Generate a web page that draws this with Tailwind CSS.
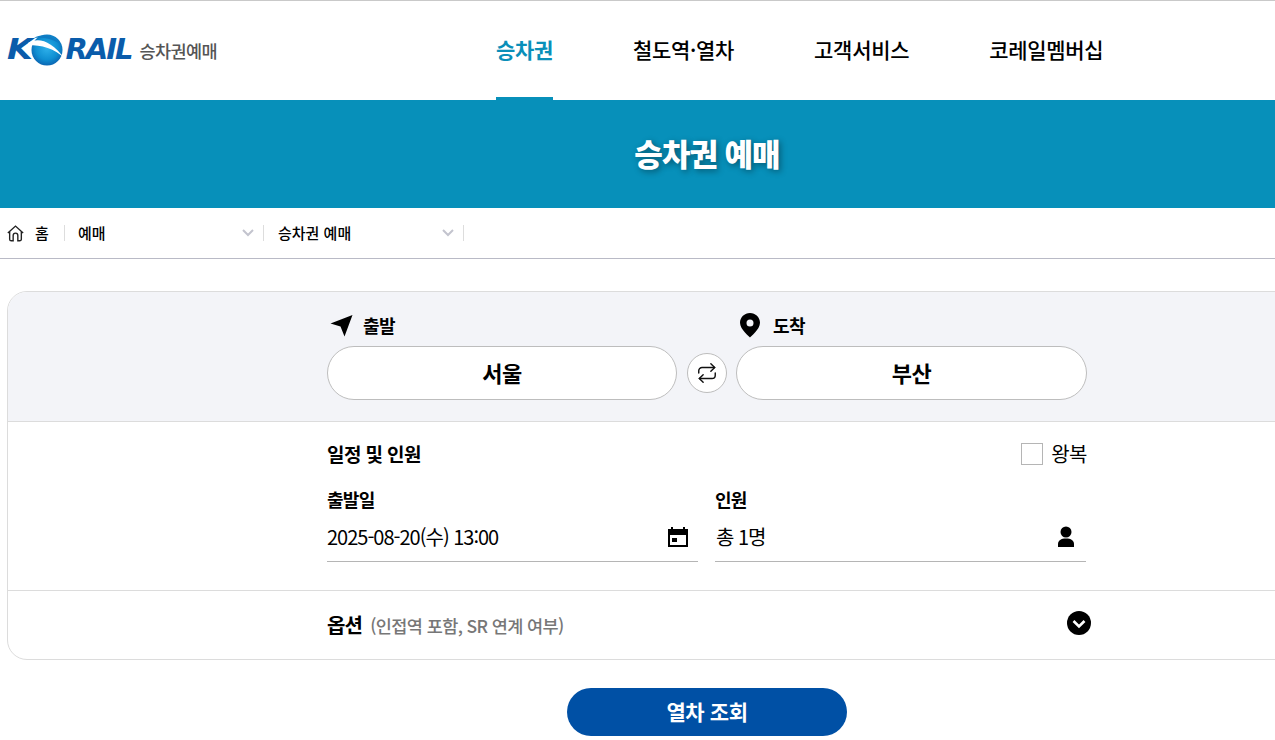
<!DOCTYPE html>
<html lang="ko">
<head>
<meta charset="utf-8">
<title>승차권 예매</title>
<script src="https://cdn.jsdelivr.net/npm/@tailwindcss/browser@4"></script>
</head>
<body class="bg-white text-black overflow-hidden font-['Noto_Sans_CJK_KR','Noto_Sans',sans-serif]">
<div class="w-[1275px] h-[740px] overflow-hidden">

  <!-- Header -->
  <header class="h-[100px] border-t border-[#c9c9c9] flex relative">
    <div class="w-[490px] shrink-0 flex items-center pl-[7px] pb-[2px]">
      <div class="relative flex items-center font-['DejaVu_Sans',sans-serif] italic font-bold text-[#0a5cab] text-[29px] leading-none tracking-[-2px]">
        <span class="inline-block origin-left scale-x-[1.15]">K</span>
        <svg class="w-[38px] h-[32px] relative z-10" viewBox="0 0 38 32">
          <defs>
            <radialGradient id="globe" cx="0.5" cy="0.45" r="0.6">
              <stop offset="0" stop-color="#2eb0ea"/>
              <stop offset="0.6" stop-color="#0f8fd2"/>
              <stop offset="1" stop-color="#0a5cab"/>
            </radialGradient>
          </defs>
          <circle cx="20" cy="16" r="15.500" fill="url(#globe)"/>
          <path d="M1 9C11 3 24 6 38 25C28 14 14 11 1 11Z" fill="#fff"/>
          <path d="M7 4C15 -1 26 1 32 9C24 4 15 3 7 4Z" fill="#0f7cc4"/>
        </svg>
        <span>RAIL</span>
      </div>
      <span class="ml-[8px] mt-[3px] text-[17.500px] font-medium text-[#555] tracking-[-0.6px]">승차권예매</span>
    </div>
    <nav class="flex text-[21px] font-medium tracking-[-0.3px] leading-none">
      <a class="relative flex items-center h-full w-[57px] justify-center whitespace-nowrap ml-[6px] pb-[2px] text-[#0a8fb9] font-bold">승차권<span class="absolute left-0 right-0 bottom-0 h-[3px] bg-[#0790ba]"></span></a>
      <a class="flex items-center h-full ml-[80px] pb-[2px] whitespace-nowrap">철도역·열차</a>
      <a class="flex items-center h-full ml-[80px] pb-[2px] whitespace-nowrap">고객서비스</a>
      <a class="flex items-center h-full ml-[80px] pb-[2px] whitespace-nowrap">코레일멤버십</a>
    </nav>
  </header>

  <!-- Title banner -->
  <div class="h-[108px] bg-[#0790ba] flex items-center justify-center pl-[139px] pb-[2px]">
    <h1 class="text-[31px] font-extrabold text-white tracking-[-1px] [text-shadow:2px_2px_6px_rgba(0,0,0,0.4)]">승차권 예매</h1>
  </div>

  <!-- Breadcrumb -->
  <div class="h-[51px] border-b border-[#b9bac6] flex items-center text-[15px] font-medium">
    <div class="flex items-center w-[65px] h-[16px] pl-[7px] border-r border-[#ddd]">
      <svg class="w-[17px] h-[17px] shrink-0" viewBox="0 0 16 16" fill="none" stroke="#222" stroke-width="1.300">
        <path d="M0.800 7.600L8 1l7.200 6.600M2.500 6.300v7a1.500 1.500 0 0 0 1.500 1.500h1.800V9.800a2.200 2.200 0 0 1 4.400 0v5h1.800a1.500 1.500 0 0 0 1.500-1.500v-7"/>
      </svg>
      <span class="ml-[11px]">홈</span>
    </div>
    <div class="flex items-center justify-between w-[199px] h-[16px] pl-[13px] pr-[9px] border-r border-[#ddd]">
      <span>예매</span>
      <svg class="w-[12px] h-[8px]" viewBox="0 0 12 8" fill="none" stroke="#c3c4ce" stroke-width="2"><path d="M1 1l5 5 5-5"/></svg>
    </div>
    <div class="flex items-center justify-between w-[200px] h-[16px] pl-[14px] pr-[9px] border-r border-[#ddd]">
      <span>승차권 예매</span>
      <svg class="w-[12px] h-[8px]" viewBox="0 0 12 8" fill="none" stroke="#c3c4ce" stroke-width="2"><path d="M1 1l5 5 5-5"/></svg>
    </div>
  </div>

  <!-- Reservation card -->
  <section class="mt-[32px] ml-[7px] w-[1400px] h-[369px] border border-[#dcdcdc] rounded-[20px] overflow-hidden">
    <div class="h-[130px] bg-[#f3f4f8] border-b border-[#dcdcdc] pl-[319px]">
      <div class="w-[760px] flex pt-[20px]">
        <div class="w-[350px]">
          <div class="flex items-center h-[26px] pl-[3px] mb-[8px]">
            <svg class="w-[23px] h-[23px]" viewBox="0 0 23 23"><path d="M22.500 1L14.500 22.500 10.500 12.600 0.500 9.500Z" fill="#000"/></svg>
            <span class="ml-[10px] text-[18px] font-bold tracking-[-0.5px]">출발</span>
          </div>
          <div class="h-[54px] rounded-full bg-white border border-[#bdbdbd] flex items-center justify-center pb-[2px] text-[22px] font-bold tracking-[-0.5px]">서울</div>
        </div>
        <div class="w-[59px] pt-[34px] flex justify-center">
          <div class="mt-[7px] w-[40px] h-[40px] rounded-full bg-white border border-[#bdbdbd] flex items-center justify-center">
            <svg class="w-[22px] h-[22px]" viewBox="0 0 20 20" fill="none" stroke="#111" stroke-width="1.300" stroke-linecap="round" stroke-linejoin="round">
              <path d="M13.500 1.500L17 5l-3.500 3.500"/><path d="M17 5H5.500A3 3 0 0 0 2.500 8v2"/>
              <path d="M6.500 18.500L3 15l3.500-3.500"/><path d="M3 15h11.500a3 3 0 0 0 3-3v-2"/>
            </svg>
          </div>
        </div>
        <div class="w-[351px]">
          <div class="flex items-center h-[26px] pl-[3px] mb-[8px]">
            <svg class="w-[22px] h-[26px]" viewBox="0 0 22 26"><path fill-rule="evenodd" d="M11 1C5.500 1 1 5.400 1 10.800 1 17.500 11 25.500 11 25.500S21 17.500 21 10.800C21 5.400 16.500 1 11 1Zm0 6.600a3.500 3.500 0 1 1 0 7 3.500 3.500 0 0 1 0-7Z" fill="#000"/></svg>
            <span class="ml-[12px] text-[18px] font-bold tracking-[-0.5px]">도착</span>
          </div>
          <div class="h-[54px] rounded-full bg-white border border-[#bdbdbd] flex items-center justify-center pb-[2px] text-[22px] font-bold tracking-[-0.5px]">부산</div>
        </div>
      </div>
    </div>

    <div class="h-[169px] border-b border-[#dcdcdc] pl-[319px]">
      <div class="w-[760px] pt-[21px]">
        <div class="flex items-center justify-between h-[22px]">
          <h2 class="text-[19px] font-bold tracking-[-0.6px]">일정 및 인원</h2>
          <label class="flex items-center text-[20px] tracking-[-0.5px]">
            <span class="w-[22px] h-[22px] border border-[#b5b5b5] bg-white"></span>
            <span class="ml-[8px]">왕복</span>
          </label>
        </div>
        <div class="flex justify-between w-[759px] mt-[22px]">
          <div class="w-[371px]">
            <div class="text-[18px] font-bold tracking-[-0.7px] leading-[24px]">출발일</div>
            <div class="mt-[3px] h-[48px] border-b border-[#b5b5b5] flex items-center justify-between pr-[10px] pb-[2px]">
              <span class="text-[20px] tracking-[-1px]">2025-08-20(수) 13:00</span>
              <svg class="w-[20px] h-[20px]" viewBox="0 0 20 20"><path fill-rule="evenodd" d="M3 0h2v2h10V0h2v2h3v18H0V2h3V0ZM2 8v10h16V8H2Zm2 3h5v4H4v-4Z" fill="#000"/></svg>
            </div>
          </div>
          <div class="w-[371px]">
            <div class="text-[18px] font-bold tracking-[-0.7px] leading-[24px]">인원</div>
            <div class="mt-[3px] h-[48px] border-b border-[#b5b5b5] flex items-center justify-between pl-px pr-[11px] pb-[2px]">
              <span class="text-[20px] tracking-[-1px]">총 1명</span>
              <svg class="w-[18px] h-[22px]" viewBox="0 0 18 22"><circle cx="9" cy="6" r="5.500" fill="#000"/><path d="M1 21v-3c0-3.500 3-5.500 8-5.500s8 2 8 5.500v3Z" fill="#000"/></svg>
            </div>
          </div>
        </div>
      </div>
    </div>

    <div class="h-[67px] pl-[319px]">
      <div class="w-[764px] flex items-center justify-between h-full">
        <div class="flex items-baseline">
          <span class="text-[20px] font-bold tracking-[-0.8px]">옵션</span>
          <span class="ml-[8px] text-[17.500px] font-medium text-[#777] tracking-[-0.6px]">(인접역 포함, SR 연계 여부)</span>
        </div>
        <svg class="w-[24px] h-[24px] mb-[3px]" viewBox="0 0 24 24"><circle cx="12" cy="12" r="12" fill="#000"/><path d="M6.500 10l5.500 5.500 5.500-5.500" fill="none" stroke="#fff" stroke-width="2.600"/></svg>
      </div>
    </div>
  </section>

  <!-- Search button -->
  <div class="pl-[567px] mt-[28px]">
    <button class="w-[280px] h-[48px] rounded-full bg-[#0050a5] text-white text-[21px] font-bold tracking-[-0.4px]">열차 조회</button>
  </div>
</div>
</body>
</html>
